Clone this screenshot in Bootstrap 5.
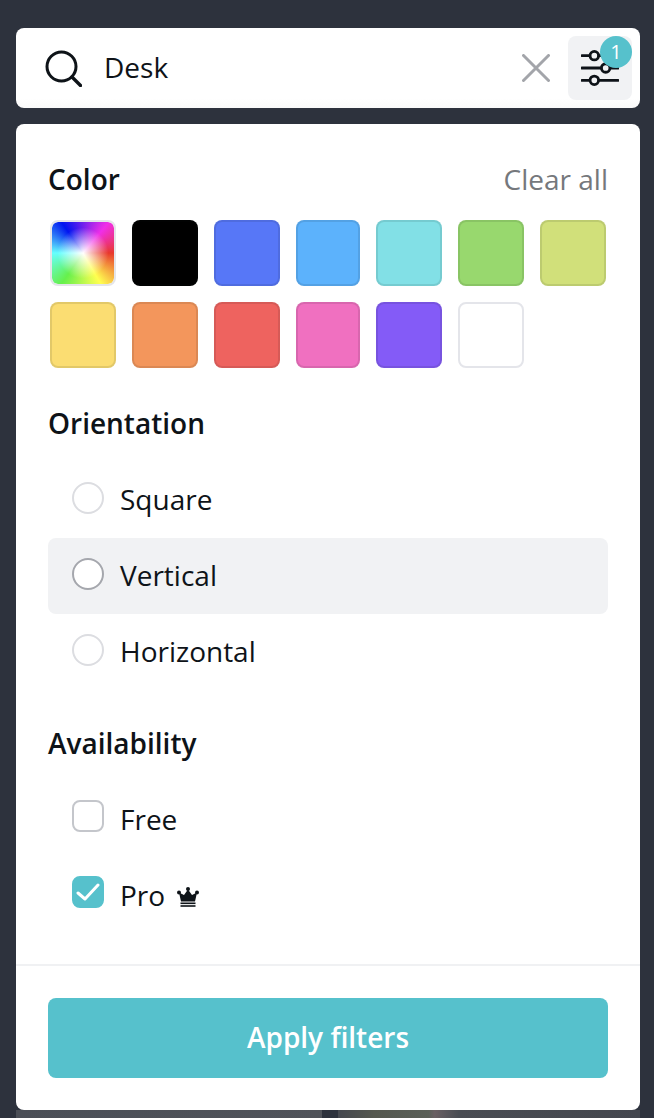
<!DOCTYPE html>
<html lang="en">
<head>
    <meta charset="UTF-8">
    <meta name="viewport" content="width=device-width, initial-scale=1.0">
    <title>Filters</title>
    <link href="https://cdn.jsdelivr.net/npm/bootstrap@5.3.0/dist/css/bootstrap.min.css" rel="stylesheet">
    <style>
        html, body {
            height: 100%;
        }

        body {
            margin: 0;
            overflow: hidden;
            background: #2d323d;
            color: #0e1318;
            font-family: "Open Sans", "Liberation Sans", sans-serif;
            font-size: 28px;
            line-height: 40px;
        }

        .page-wrap {
            padding: 28px 14px 0 16px;
        }

        /* Search bar */
        .search-bar {
            height: 80px;
            background: linear-gradient(#fff 88%, #fafafa);
            border-radius: 8px;
            padding: 0 8px 0 29px;
            margin-bottom: 16px;
        }

        .search-text {
            margin-left: 22px;
            padding-bottom: 2px;
        }

        .clear-btn {
            margin-right: 18px;
        }

        .filter-btn {
            position: relative;
            width: 64px;
            height: 64px;
            background: #f1f2f4;
            border-radius: 8px;
        }

        .count-dot {
            position: absolute;
            top: 0;
            right: 0;
            width: 32px;
            height: 32px;
            border-radius: 50%;
            background: #56c1cc;
            color: #fff;
            font-size: 20px;
            line-height: 32px;
            text-align: center;
        }

        /* Filter panel */
        .filter-panel {
            background: #fff;
            border-radius: 8px;
        }

        .panel-body {
            padding: 35px 32px 0;
        }

        .group-title {
            font-weight: 600;
            margin: 0;
            font-size: 28px;
            line-height: 40px;
        }

        .clear-all {
            color: #75787c;
        }

        /* Swatches */
        .swatch-grid {
            display: grid;
            grid-template-columns: 66px 66px 66px 64px 66px 66px 66px;
            gap: 16px;
            padding: 21px 0 35px 2px;
        }

        .swatch {
            height: 66px;
            border-radius: 8px;
            border: 2px solid rgba(14, 19, 24, 0.1);
        }

        .swatch-rainbow {
            border-color: #e4e5e9;
            background:
                radial-gradient(circle at 50% 50%, #fff 0, rgba(255, 255, 255, 0.75) 14%, rgba(255, 255, 255, 0) 58%),
                conic-gradient(from -35deg at 50% 50%, #0015f0 0deg, #f02ee8 75deg, #e8382c 125deg, #ffff50 185deg, #66f04c 250deg, #66ffff 305deg, #0015f0 360deg);
            background-clip: padding-box;
        }

        .swatch-white {
            border-color: #e4e5ea;
            background: #fff;
        }

        /* Options */
        .option-list {
            padding: 19px 0 33px;
        }

        .option-row {
            height: 76px;
            padding: 0 0 2px 24px;
            gap: 16px;
            border-radius: 8px;
        }

        .option-row.is-hover {
            background: #f1f2f4;
        }

        .radio-ring {
            width: 32px;
            height: 32px;
            margin-bottom: 2px;
            border-radius: 50%;
            background: #fff;
            border: 2px solid #dcdde1;
            flex: none;
        }

        .is-hover .radio-ring {
            border-color: #a5a7ad;
        }

        .tick-box {
            width: 32px;
            height: 32px;
            margin-bottom: 6px;
            border-radius: 8px;
            border: 2px solid #c4c6cb;
            flex: none;
        }

        .tick-box.is-on {
            background: #56c1cc;
            border-color: #56c1cc;
        }

        .crown-icon {
            margin: 4px 0 0 12px;
        }

        /* Footer */
        .panel-foot {
            border-top: 2px solid #f0f1f3;
            padding: 32px;
            margin-top: 30px;
        }

        .apply-btn {
            height: 80px;
            padding-bottom: 8px;
            background: #56c1cc;
            border: 0;
            border-radius: 8px;
            color: #fff;
            font-size: 28px;
            font-weight: 600;
        }

        .apply-btn:hover {
            background: #56c1cc;
            color: #fff;
        }

        /* Photo strip showing under the panel */
        .photo-strip {
            height: 8px;
        }

        .strip-left {
            width: 306px;
            background: linear-gradient(to right, #4b4f57, #50535a);
        }

        .strip-gap {
            width: 16px;
            background: #2d323d;
        }

        .strip-right {
            width: 302px;
            background: linear-gradient(to right, #45484f 0, #55584f 12%, #5a6058 30%, #6a5f63 32%, #4a4c53 40%, #44474e 100%);
        }
    </style>
</head>
<body>
    <div class="page-wrap">
        <!-- Search -->
        <div class="search-bar d-flex align-items-center">
            <svg width="37" height="37" viewBox="0 0 37 37" fill="none" stroke="#0e1318" stroke-width="3">
                <circle cx="16.5" cy="16.5" r="14.5"></circle>
                <path d="M27 27 L35.5 35.5" stroke-linecap="round" stroke-width="3.4"></path>
            </svg>
            <span class="search-text flex-grow-1">Desk</span>
            <svg class="clear-btn" width="28" height="28" viewBox="0 0 28 28" fill="none" stroke="#a3a5aa" stroke-width="3">
                <path d="M1.5 1.5 L26.5 26.5 M26.5 1.5 L1.5 26.5" stroke-linecap="round"></path>
            </svg>
            <div class="filter-btn d-flex align-items-center justify-content-center">
                <svg width="38" height="36" viewBox="0 0 40 38" fill="none" stroke="#0e1318" stroke-width="3">
                    <path d="M1 6 H9 M19 6 H39 M1 19 H21 M31 19 H39 M1 32 H9 M19 32 H39" stroke-linecap="round"></path>
                    <circle cx="14" cy="6" r="4.5"></circle>
                    <circle cx="26" cy="19" r="4.5"></circle>
                    <circle cx="14" cy="32" r="4.5"></circle>
                </svg>
                <span class="count-dot">1</span>
            </div>
        </div>

        <!-- Panel -->
        <div class="filter-panel">
            <div class="panel-body">
                <div class="d-flex justify-content-between align-items-center">
                    <h2 class="group-title">Color</h2>
                    <span class="clear-all">Clear all</span>
                </div>
                <div class="swatch-grid">
                    <div class="swatch swatch-rainbow"></div>
                    <div class="swatch" style="background-color:#000"></div>
                    <div class="swatch" style="background-color:#5777f7"></div>
                    <div class="swatch" style="background-color:#5cb2fc"></div>
                    <div class="swatch" style="background-color:#82e0e6"></div>
                    <div class="swatch" style="background-color:#98d86e"></div>
                    <div class="swatch" style="background-color:#d1e07a"></div>
                    <div class="swatch" style="background-color:#fbdd72"></div>
                    <div class="swatch" style="background-color:#f3965c"></div>
                    <div class="swatch" style="background-color:#ee635f"></div>
                    <div class="swatch" style="background-color:#f070c0"></div>
                    <div class="swatch" style="background-color:#845bf7"></div>
                    <div class="swatch swatch-white"></div>
                </div>

                <h2 class="group-title">Orientation</h2>
                <div class="option-list">
                    <div class="option-row d-flex align-items-center"><span class="radio-ring"></span>Square</div>
                    <div class="option-row is-hover d-flex align-items-center"><span class="radio-ring"></span>Vertical</div>
                    <div class="option-row d-flex align-items-center"><span class="radio-ring"></span>Horizontal</div>
                </div>

                <h2 class="group-title">Availability</h2>
                <div class="option-list pb-0">
                    <div class="option-row d-flex align-items-center"><span class="tick-box"></span>Free</div>
                    <div class="option-row d-flex align-items-center">
                        <span class="tick-box is-on d-flex align-items-center justify-content-center">
                            <svg width="24" height="20" viewBox="0 0 24 20" fill="none" stroke="#fff" stroke-width="3" stroke-linecap="round" stroke-linejoin="round">
                                <path d="M2 11 L9 17 L22 3"></path>
                            </svg>
                        </span>
                        <span class="d-flex align-items-center">Pro<svg class="crown-icon" width="22" height="20" viewBox="0 0 22 20" fill="#0e1318">
                            <circle cx="11" cy="2" r="2"></circle>
                            <circle cx="2" cy="5.5" r="2"></circle>
                            <circle cx="20" cy="5.5" r="2"></circle>
                            <path d="M11 2.5 L15 8 L20 5.5 L18 14.5 H4 L2 5.5 L7 8 Z"></path>
                            <rect x="3.5" y="15.5" width="15" height="1.6"></rect>
                            <rect x="3.5" y="18.2" width="15" height="1.6"></rect>
                        </svg></span>
                    </div>
                </div>
            </div>
            <div class="panel-foot">
                <button type="button" class="btn apply-btn w-100">Apply filters</button>
            </div>
        </div>

        <div class="photo-strip d-flex">
            <div class="strip-left"></div>
            <div class="strip-gap"></div>
            <div class="strip-right"></div>
        </div>
    </div>
    <script src="https://cdn.jsdelivr.net/npm/bootstrap@5.3.0/dist/js/bootstrap.bundle.min.js"></script>
</body>
</html>
